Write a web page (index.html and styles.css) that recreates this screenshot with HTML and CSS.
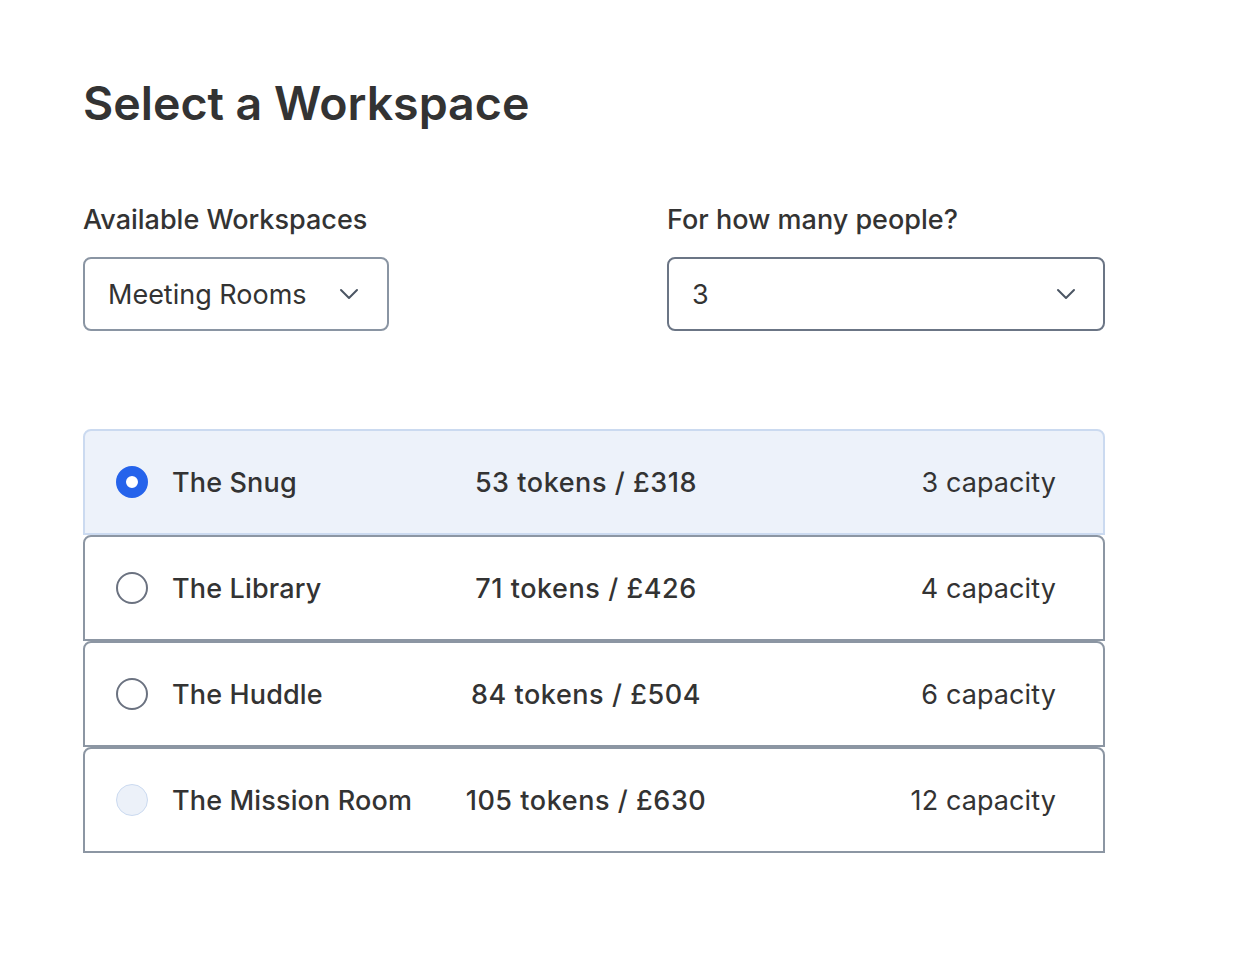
FILE: index.html
```html
<!DOCTYPE html>
<html lang="en">
<head>
<meta charset="utf-8">
<title>Select a Workspace</title>
<link rel="stylesheet" href="styles.css">
</head>
<body>
<main class="page">
  <h1 class="title">Select a Workspace</h1>
  <div class="filters">
    <div class="field field-type">
      <label class="label">Available Workspaces</label>
      <div class="select select-type">
        <span class="select-value">Meeting Rooms</span>
        <svg class="chevron" viewBox="0 0 20 12" width="20" height="12"><path d="M2 2 L10 10 L18 2" fill="none" stroke="#4b5563" stroke-width="2" stroke-linecap="round" stroke-linejoin="round"/></svg>
      </div>
    </div>
    <div class="field field-people">
      <label class="label">For how many people?</label>
      <div class="select select-people">
        <span class="select-value">3</span>
        <svg class="chevron" viewBox="0 0 20 12" width="20" height="12"><path d="M2 2 L10 10 L18 2" fill="none" stroke="#4b5563" stroke-width="2" stroke-linecap="round" stroke-linejoin="round"/></svg>
      </div>
    </div>
  </div>

  <div class="rooms">
    <div class="room room-selected">
      <div class="room-name"><span class="radio radio-checked"></span>The Snug</div>
      <div class="room-price">53 tokens / £318</div>
      <div class="room-cap">3 capacity</div>
    </div>
    <div class="room">
      <div class="room-name"><span class="radio"></span>The Library</div>
      <div class="room-price">71 tokens / £426</div>
      <div class="room-cap">4 capacity</div>
    </div>
    <div class="room">
      <div class="room-name"><span class="radio"></span>The Huddle</div>
      <div class="room-price">84 tokens / £504</div>
      <div class="room-cap">6 capacity</div>
    </div>
    <div class="room">
      <div class="room-name"><span class="radio radio-disabled"></span>The Mission Room</div>
      <div class="room-price">105 tokens / £630</div>
      <div class="room-cap">12 capacity</div>
    </div>
  </div>
</main>
</body>
</html>
```

FILE: styles.css
```css
* { box-sizing: border-box; }
html, body { margin: 0; padding: 0; background: #ffffff; }
body {
  font-family: Inter, "Noto Sans", "Liberation Sans", sans-serif;
  color: #333333;
}
.page {
  padding: 72px 0 0 83px;
  width: 1105px;
}
.title {
  margin: 0;
  font-size: 46.5px;
  line-height: 62px;
  font-weight: 600;
  letter-spacing: 0;
  color: #333333;
}
.filters {
  margin-top: 70px;
  display: grid;
  grid-template-columns: 584px 438px;
}
.field {
  display: flex;
  flex-direction: column;
  gap: 21px;
}
.label {
  font-size: 27px;
  line-height: 32px;
  font-weight: 500;
  color: #333333;
}
.select {
  height: 74px;
  border: 2px solid #8a95a3;
  border-radius: 8px;
  display: flex;
  align-items: center;
  justify-content: space-between;
  font-size: 27px;
  color: #333333;
  background: #fff;
}
.select-type {
  width: 306px;
  padding: 0 28px 0 23px;
}
.select-people {
  width: 438px;
  padding: 0 27px 0 23px;
  border-color: #6b7585;
}
.chevron { display: block; }
.rooms {
  margin-top: 98px;
  width: 1022px;
  display: flex;
  flex-direction: column;
}
.room {
  height: 106px;
  border: 2px solid #8c96a3;
  border-radius: 8px 8px 0 0;
  display: grid;
  grid-template-columns: 1fr 1fr 1fr;
  align-items: center;
  padding: 0 47px 0 31px;
  font-size: 27px;
  font-weight: 500;
  letter-spacing: 0.15px;
  color: #333333;
  background: #ffffff;
}
.room-selected {
  background: #edf2fa;
  border: 2px solid #cbdaf0;
}
.room-name {
  display: flex;
  align-items: center;
  gap: 24px;
  white-space: nowrap;
}
.room-price { text-align: center; white-space: nowrap; letter-spacing: 0.55px; }
.room-cap { text-align: right; white-space: nowrap; font-weight: 400; letter-spacing: 0.1px; }
.radio {
  width: 32px;
  height: 32px;
  border-radius: 50%;
  border: 2px solid #6b7280;
  background: #fff;
  flex: none;
}
.radio-checked {
  border: 10px solid #2563eb;
  background: #ffffff;
}
.radio-disabled {
  border: 1.5px solid #cbdaf0;
  background: #ecf1f9;
}
```
